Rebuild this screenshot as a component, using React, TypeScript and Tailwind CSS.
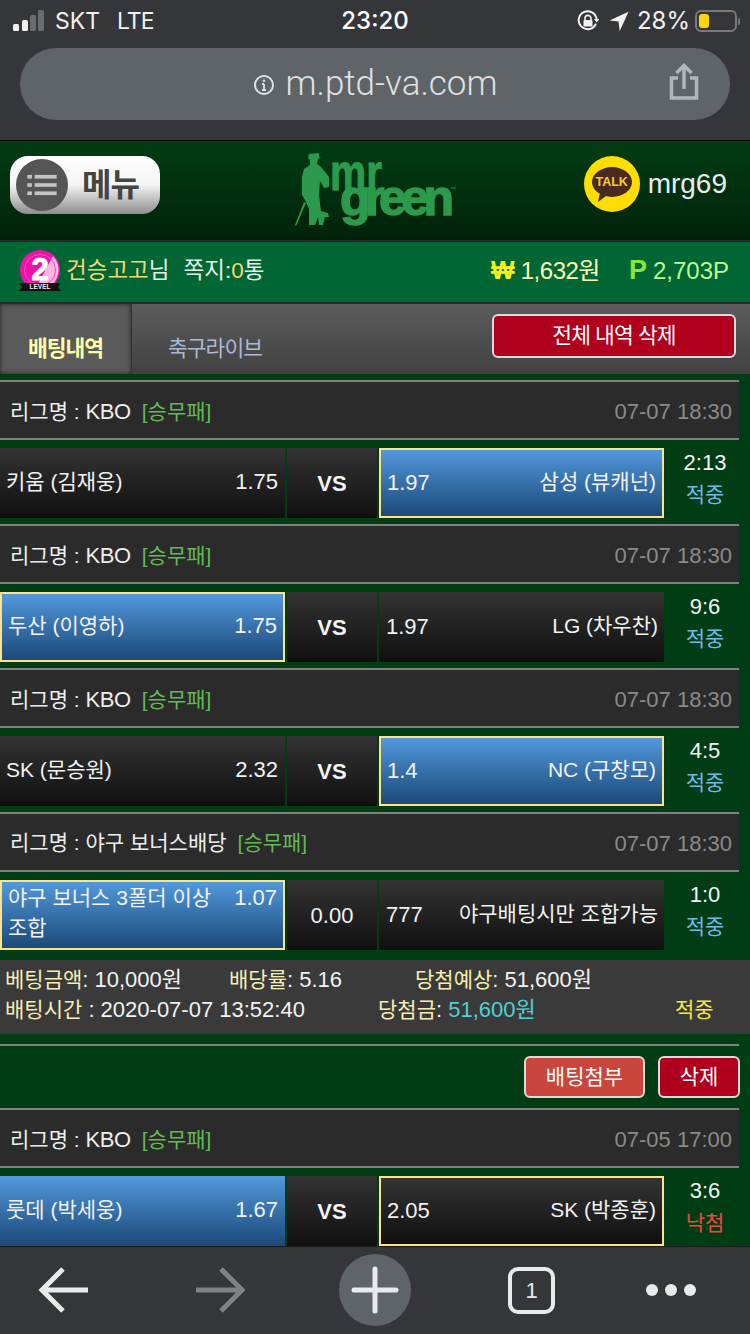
import React from 'react'

const fontStack = '[font-family:"Liberation_Sans","Noto_Sans_CJK_KR",sans-serif]'

interface Side {
  name: React.ReactNode
  odds: string
  blue?: boolean
  border?: boolean
}

interface Game {
  league: string
  date: string
  home: Side
  middle: string
  away: Side
  score: string
  result: string
  lost?: boolean
}

const games: Game[] = [
  {
    league: 'KBO',
    date: '07-07 18:30',
    home: { name: '키움 (김재웅)', odds: '1.75' },
    middle: 'VS',
    away: { name: '삼성 (뷰캐넌)', odds: '1.97', blue: true, border: true },
    score: '2:13',
    result: '적중',
  },
  {
    league: 'KBO',
    date: '07-07 18:30',
    home: { name: '두산 (이영하)', odds: '1.75', blue: true, border: true },
    middle: 'VS',
    away: { name: 'LG (차우찬)', odds: '1.97' },
    score: '9:6',
    result: '적중',
  },
  {
    league: 'KBO',
    date: '07-07 18:30',
    home: { name: 'SK (문승원)', odds: '2.32' },
    middle: 'VS',
    away: { name: 'NC (구창모)', odds: '1.4', blue: true, border: true },
    score: '4:5',
    result: '적중',
  },
  {
    league: '야구 보너스배당',
    date: '07-07 18:30',
    home: { name: '야구 보너스 3폴더 이상 조합', odds: '1.07', blue: true, border: true },
    middle: '0.00',
    away: { name: '야구배팅시만 조합가능', odds: '777' },
    score: '1:0',
    result: '적중',
  },
]

const lastGame: Game = {
  league: 'KBO',
  date: '07-05 17:00',
  home: { name: '룻데 (박세웅)', odds: '1.67', blue: true },
  middle: 'VS',
  away: { name: 'SK (박종훈)', odds: '2.05', border: true },
  score: '3:6',
  result: '낙첨',
  lost: true,
}

const boxClass = (side: Side) =>
  `w-[285px] h-[70px] shrink-0 flex justify-between text-[#f2f2f2] ${
    side.blue ? 'bg-gradient-to-b from-[#5299dc] to-[#1b4a79]' : 'bg-gradient-to-b from-[#343434] to-[#101010]'
  } ${side.border ? 'border-2 border-[#ffe28c]' : ''}`

const GameRow = ({ game }: { game: Game }) => {
  const twoLines = game.middle !== 'VS'
  return (
    <div>
      <div className="w-[739px] h-[60px] bg-[#2b2b2b] border-y-2 border-[#808080] flex items-center justify-between pl-[10px] pr-[7px] pt-[2px] text-[21px]">
        <div className="text-[#eeeeee] whitespace-nowrap">
          리그명 :{' '}
          <span className={game.league === 'KBO' ? 'text-[22px] tracking-[-0.4px]' : 'text-[21px]'}>{game.league}</span>
          <span className="ml-[11px] text-[#63b955]">[승무패]</span>
        </div>
        <div className="text-[22px] text-[#8a8a8a]">{game.date}</div>
      </div>
      <div className="flex pt-[8px] pb-[6px]">
        <div
          className={`${boxClass(game.home)} ${game.home.border ? 'px-[6px]' : 'pl-[6px] pr-[7px]'} ${
            twoLines ? 'items-start pt-[1px]' : 'items-center pb-[2px]'
          }`}
        >
          <div className="w-[214px] text-[21px] leading-[30px]">{game.home.name}</div>
          <div className="text-[22px] leading-[30px]">{game.home.odds}</div>
        </div>
        <div className="w-[90px] h-[70px] ml-[2px] shrink-0 flex items-center justify-center bg-gradient-to-b from-[#343434] to-[#101010] text-[#f2f2f2]">
          {twoLines ? (
            <span className="text-[22px]">{game.middle}</span>
          ) : (
            <span className="text-[22px] font-bold">VS</span>
          )}
        </div>
        <div
          className={`${boxClass(game.away)} ${
            game.away.border ? 'px-[6px]' : 'pl-[7px] pr-[6px]'
          } items-center pb-[2px] ml-[2px]`}
        >
          <div className="text-[22px]">{game.away.odds}</div>
          <div className="text-[21px] whitespace-nowrap">{game.away.name}</div>
        </div>
        <div className="w-[82px] shrink-0 flex flex-col items-center leading-[30px]">
          <div className="text-[22px] text-[#f4f4f4]">{game.score}</div>
          <div className={`text-[21px] ${game.lost ? 'text-[#f0473f]' : 'text-[#6fb9e6]'} mt-[2px]`}>{game.result}</div>
        </div>
      </div>
    </div>
  )
}

const StatusBar = () => (
  <div className="h-[42px] mb-[6px] relative flex items-center justify-between pl-[13px] pr-[10px] text-[#f1f1f1]">
    <div className="flex items-center">
      <svg width="32" height="24" viewBox="0 0 32 24" fill="currentColor">
        <rect x="0" y="15" width="6" height="7" rx="1.5" />
        <rect x="9" y="11" width="6" height="11" rx="1.5" />
        <rect x="17" y="6" width="6" height="16" rx="1.5" fill="#6a6b6e" />
        <rect x="25" y="1" width="6" height="21" rx="1.5" fill="#6a6b6e" />
      </svg>
      <span className="ml-[10px] text-[23px] font-['Inter']">SKT</span>
      <span className="ml-[17px] text-[23px] font-['Inter'] tracking-[-1px]">LTE</span>
    </div>
    <div className="absolute left-0 right-0 text-center text-[24px] font-medium font-['Inter'] text-white">23:20</div>
    <div className="flex items-center">
      <svg width="22" height="22" viewBox="0 0 22 22" fill="none" stroke="currentColor" strokeWidth="2">
        <path d="M18.6 14.5A9 9 0 1 1 19.6 9" strokeLinecap="round" />
        <path d="M17 9h5.5l-2.8 3.5z" fill="currentColor" stroke="none" />
        <path d="M8 10V8.4a3 3 0 0 1 6 0V10" strokeWidth="1.6" />
        <rect x="6.5" y="10" width="9" height="6.5" rx="1" fill="currentColor" stroke="none" />
      </svg>
      <svg className="ml-[10px]" width="20" height="21" viewBox="0 0 20 21" fill="currentColor">
        <path d="M19.5 0.8 0.5 9.6l9 .9 1.2 9.7z" />
      </svg>
      <span className="ml-[8px] text-[24px] font-['Inter'] leading-none">28%</span>
      <div className="ml-[5px] w-[42px] h-[22px] border-2 border-[#77787a] rounded-[6px] p-[2px]">
        <div className="w-[10px] h-full rounded-[3px] bg-[#ffd60a]" />
      </div>
      <div className="w-[2px] h-[7px] ml-[1px] bg-[#77787a] rounded-r-[2px]" />
    </div>
  </div>
)

const Logo = () => (
  <svg className="overflow-visible" width="170" height="90" viewBox="0 0 170 90" fill="#2c9a4c">
    <path d="M24 9 34 8v4h2l-3 2-1 5 4 3 8 10v10l-5 1-4-7-1 14 2 16 7 2 1 4h-4l-2 8h-4l-1-8-3 8h-6V64l-4-9-3-5V32l2-8 6-4v-5l-2-2z" />
    <path d="M19 57l2 1-10 23-1-1z" />
    <text
      x="45"
      y="45"
      fontFamily="Liberation Sans"
      fontWeight="700"
      fontSize="52"
      stroke="#2c9a4c"
      strokeWidth="1"
      textLength="52"
      lengthAdjust="spacingAndGlyphs"
    >
      mr
    </text>
    <text
      x="55"
      y="70"
      fontFamily="Liberation Sans"
      fontWeight="700"
      fontSize="50"
      stroke="#2c9a4c"
      strokeWidth="1.5"
      letterSpacing="-5.5"
    >
      green
    </text>
    <text x="165" y="46" fontFamily="Liberation Sans" fontSize="6">
      ™
    </text>
  </svg>
)

const LevelBadge = () => (
  <svg width="42" height="42" viewBox="0 0 42 42">
    <circle cx="21" cy="20" r="20" fill="#ee12a8" />
    <path d="M34 6a20 20 0 0 1-6 32L20 32z" fill="#fbb6e4" />
    <circle cx="21" cy="20" r="15.5" fill="none" stroke="#f64dc0" strokeWidth="1" />
    <text x="21" y="30" textAnchor="middle" fontFamily="Liberation Sans" fontWeight="700" fontSize="31" stroke="#fff" strokeWidth="1" fill="#fff">
      2
    </text>
    <path d="M0 33h42l-3 4 3 4H0l3-4z" fill="#111" />
    <text x="21" y="38.6" textAnchor="middle" fontFamily="Liberation Sans" fontWeight="700" fontSize="6.5" fill="#eee">
      LEVEL
    </text>
  </svg>
)

export default function App() {
  return (
    <div className={`w-[750px] h-[1334px] flex flex-col overflow-hidden bg-[#003c14] ${fontStack}`}>
      {/* browser chrome */}
      <div className="h-[140px] shrink-0 bg-[#35363a]">
        <StatusBar />
        <div className="mx-[20px] h-[72px] rounded-full bg-[#5f6468] relative flex items-center justify-center text-[#dfe1e3]">
          <svg className="mr-[11px] mt-[2px]" width="22" height="22" viewBox="0 0 22 22" fill="none" stroke="currentColor" strokeWidth="2">
            <circle cx="11" cy="11" r="9" />
            <path d="M11 10v6M9 10h2M9 16h4" strokeWidth="1.8" />
            <circle cx="11" cy="6.8" r="1.2" fill="currentColor" stroke="none" />
          </svg>
          <span className="text-[35px] font-['Roboto'] font-light">m.ptd-va.com</span>
          <svg className="absolute right-[31px] top-[15px]" width="30" height="37" viewBox="0 0 30 37" fill="none" stroke="#b3b6b8" strokeWidth="3.5">
            <path d="M9 15H2.5v20h25V15H21" />
            <path d="M15 26V3M7.5 10 15 2.5 22.5 10" />
          </svg>
        </div>
      </div>

      {/* site header */}
      <div className="h-[100px] shrink-0 border-t border-black bg-gradient-to-b from-[#023d14] to-[#012209] flex items-start pl-[10px] pr-[23px]">
        <div className="w-[150px] h-[58px] mt-[15px] rounded-[18px] bg-gradient-to-b from-[#ffffff] via-[#f4f4f4] to-[#8e8e8e] flex items-center pl-[6px]">
          <div className="w-[52px] h-[52px] rounded-full bg-[#555555] flex items-center justify-center">
            <svg width="30" height="22" viewBox="0 0 32 24" fill="#c4c4c4">
              <rect x="0" y="1" width="5" height="4" />
              <rect x="8" y="1" width="24" height="4" />
              <rect x="0" y="10" width="5" height="4" />
              <rect x="8" y="10" width="24" height="4" />
              <rect x="0" y="19" width="5" height="4" />
              <rect x="8" y="19" width="24" height="4" />
            </svg>
          </div>
          <span className="ml-[14px] text-[32px] font-bold text-[#444444] tracking-[-1px]">메뉴</span>
        </div>
        <div className="ml-[125px] mt-[4px]">
          <Logo />
        </div>
        <div className="flex items-center ml-auto mt-[15px]">
          <div className="relative w-[56px] h-[56px] rounded-full bg-[#ffdd00] flex items-center justify-center">
            <div className="w-[40px] h-[30px] mt-[-4px] rounded-[50%] bg-[#4a2a1f] flex items-center justify-center text-[12.5px] font-bold text-[#f5cf2a]">
              TALK
            </div>
            <svg className="absolute left-[14px] top-[37px]" width="10" height="10" viewBox="0 0 10 10" fill="#4a2a1f">
              <path d="M2 0 0 9l8-6z" />
            </svg>
          </div>
          <span className="ml-[8px] text-[28px] text-[#ececec]">mrg69</span>
        </div>
      </div>

      {/* user info */}
      <div className="h-[64px] shrink-0 border-y-2 border-[#2a2a2a] bg-[#006633] flex items-center pl-[19px] pr-[21px] pb-[3px] text-[22.5px] text-[#e8f4ea]">
        <LevelBadge />
        <span className="ml-[5px] text-[#f5d774]">건승고고</span>
        <span>님</span>
        <span className="ml-[14px]">쪽지:</span>
        <span className="text-[#f5d774]">0</span>
        <span>통</span>
        <span className="ml-auto w-[24px] text-[25px] leading-none font-bold text-[#f6f01e] text-center">₩</span>
        <span className="ml-[6px] text-[24px] text-[#ffffb4] tracking-[-0.5px]">1,632원</span>
        <span className="ml-[29px] text-[27px] leading-none font-bold text-[#86e83c]">P</span>
        <span className="ml-[6px] text-[24px] text-[#bbff96]">2,703P</span>
      </div>

      {/* tabs */}
      <div className="h-[70px] shrink-0 bg-gradient-to-b from-[#5c5c5c] to-[#414141] flex items-stretch">
        <div className="w-[132px] bg-[#5a5a5a] shadow-[inset_0_0_4px_#222] flex items-end justify-center pb-[9px] text-[21.5px] font-bold text-[#ffffa8] tracking-[-1px] border-r border-[#333]">
          배팅내역
        </div>
        <div className="w-[166px] flex items-end justify-center pb-[9px] text-[21.5px] text-[#a9b9d2] tracking-[-1px]">
          축구라이브
        </div>
        <div className="ml-auto mr-[14px] mt-[10px] w-[244px] h-[44px] rounded-[6px] border-2 border-[#dcdcdc] bg-[#b0001e] flex items-center justify-center text-[21.5px] text-white tracking-[-0.9px]">
          전체 내역 삭제
        </div>
      </div>

      {/* bet list */}
      <div className="flex-1 min-h-0 overflow-hidden pt-[6px]">
        {games.map((game, i) => (
          <GameRow key={i} game={game} />
        ))}
        <div className="w-[750px] h-[74px] mt-[4px] bg-[#3a3a3a] pl-[5px] pt-[5px] text-[22px] leading-[30px] text-[#f2f2f2]">
          <div className="flex">
            <div className="w-[224px]">
              <span className="text-[21px] text-[#f8eeb0]">베팅금액</span>: 10,000원
            </div>
            <div className="w-[186px]">
              <span className="text-[21px] text-[#f8eeb0]">배당률</span>: 5.16
            </div>
            <div>
              <span className="text-[21px] text-[#f8eeb0]">당첨예상</span>: 51,600원
            </div>
          </div>
          <div className="flex">
            <div className="w-[373px]">
              <span className="text-[21px] text-[#f8eeb0]">배팅시간</span> : 2020-07-07 13:52:40
            </div>
            <div className="w-[297px]">
              <span className="text-[21px] text-[#f8eeb0]">당첨금</span>: <span className="text-[#4fd0d0]">51,600원</span>
            </div>
            <div className="text-[21px] text-[#f7e83c]">적중</div>
          </div>
        </div>
        <div className="w-[739px] h-[2px] mt-[10px] bg-[#808080]" />
        <div className="w-[740px] h-[62px] flex items-center justify-end gap-[13px] text-[21px] text-white">
          <div className="w-[121px] h-[42px] rounded-[6px] border-2 border-[#dcdcdc] bg-[#c9463c] flex items-center justify-center">
            배팅첨부
          </div>
          <div className="w-[82px] h-[42px] rounded-[6px] border-2 border-[#dcdcdc] bg-[#b0001e] flex items-center justify-center">
            삭제
          </div>
        </div>
        <GameRow game={lastGame} />
      </div>

      {/* browser toolbar */}
      <div className="h-[88px] shrink-0 border-t border-[#1a1a1a] bg-[#35363a] flex items-center relative">
        <svg className="absolute left-[38px] top-[19px]" width="52" height="48" viewBox="0 0 52 48" fill="none" stroke="#e8eaed" strokeWidth="5">
          <path d="M50 24H6M25 3 4 24l21 21" />
        </svg>
        <svg className="absolute left-[194px] top-[19px]" width="52" height="48" viewBox="0 0 52 48" fill="none" stroke="#808285" strokeWidth="5">
          <path d="M2 24h44M27 3l21 21-21 21" />
        </svg>
        <div className="absolute left-[339px] top-[7px] w-[72px] h-[72px] rounded-full bg-[#5f6468] flex items-center justify-center">
          <svg width="48" height="48" viewBox="0 0 48 48" stroke="#e8eaed" strokeWidth="5" strokeLinecap="round">
            <path d="M24 3v42M3 24h42" />
          </svg>
        </div>
        <div className="absolute left-[508px] top-[20px] w-[47px] h-[47px] rounded-[10px] border-4 border-[#e8eaed] flex items-center justify-center text-[22px] text-[#e8eaed]">
          1
        </div>
        <div className="absolute left-[646px] top-[37px] flex gap-[7px]">
          <div className="w-[12px] h-[12px] rounded-full bg-[#e8eaed]" />
          <div className="w-[12px] h-[12px] rounded-full bg-[#e8eaed]" />
          <div className="w-[12px] h-[12px] rounded-full bg-[#e8eaed]" />
        </div>
      </div>
    </div>
  )
}
